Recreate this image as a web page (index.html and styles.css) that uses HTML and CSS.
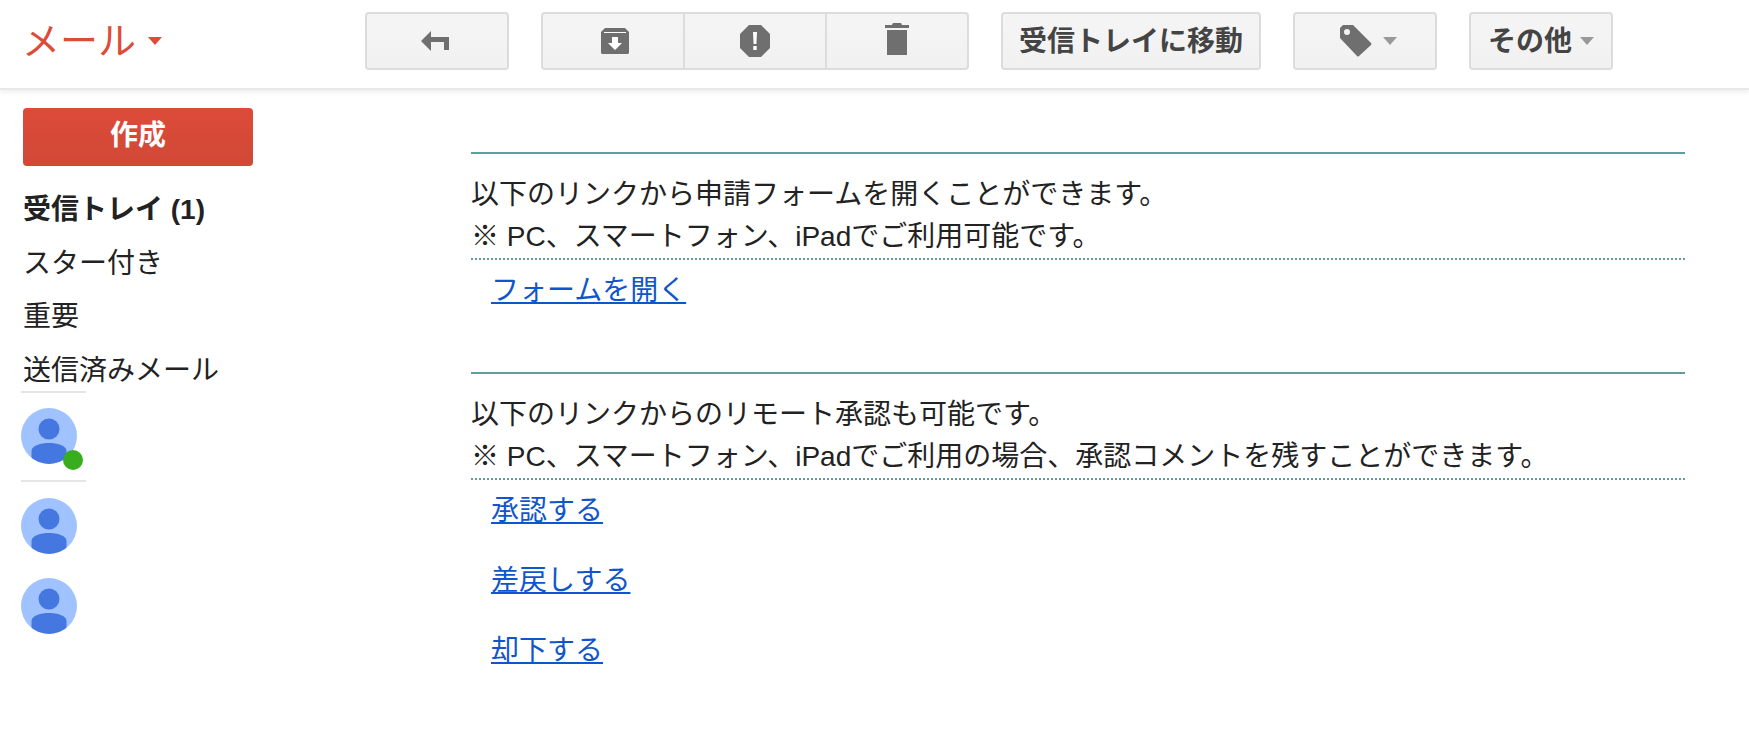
FILE: index.html
```html
<!DOCTYPE html>
<html lang="ja">
<head>
    <meta charset="UTF-8">
    <title>メール</title>
    <link rel="stylesheet" href="styles.css">
</head>
<body>
    <header class="toolbar">
        <div class="logo">メール<span class="logo-caret"></span></div>

        <div class="btn btn-icon">
            <svg class="reply-icon" width="28" height="20" viewBox="0 0 28 20"><path d="M0 10 10 0V6H28V19H23V11H10V20Z" fill="#6f6f6f"/></svg>
        </div>

        <div class="btn-group">
            <div class="btn-cell">
                <svg class="archive-icon" width="28" height="26" viewBox="0 0 28 26"><path d="M4 0H24L28 4V25L27 26H1L0 25V4Z" fill="#6f6f6f"/><path d="M3 4H25V5H3ZM11 9H17V15H21L14 22 7 15H11Z" fill="#fff"/></svg>
            </div>
            <div class="btn-cell">
                <svg width="30" height="32" viewBox="0 0 30 32"><path d="M9 0H21L30 9V23L21 32H9L0 23V9Z" fill="#6f6f6f"/><path d="M13 7H17L16.400 19H13.600ZM13.300 21H16.700V25H13.300Z" fill="#fff"/></svg>
            </div>
            <div class="btn-cell">
                <svg class="trash-icon" width="24" height="32" viewBox="0 0 24 32"><path d="M8 0H16L17 2H24V5H0V2H7ZM2 7H22V32H2Z" fill="#6f6f6f"/></svg>
            </div>
        </div>

        <div class="btn btn-text btn-move">受信トレイに移動</div>

        <div class="btn btn-tag">
            <svg width="32" height="32" viewBox="0 0 32 32"><path fill-rule="evenodd" d="M3 0H13L31 18Q32 19 31 20L19 31Q18 32 17 31L0 13V3ZM7 4A3 3 0 1 0 7 10 3 3 0 1 0 7 4Z" fill="#6f6f6f"/></svg>
            <span class="caret"></span>
        </div>

        <div class="btn btn-text btn-more">その他<span class="caret"></span></div>
    </header>

    <div class="page">
        <aside class="sidebar">
            <div class="compose">作成</div>

            <nav class="nav">
                <div class="nav-item nav-active">受信トレイ (1)</div>
                <div class="nav-item">スター付き</div>
                <div class="nav-item">重要</div>
                <div class="nav-item">送信済みメール</div>
            </nav>

            <div class="chat-me">
                <div class="avatar">
                    <svg width="56" height="56" viewBox="0 0 56 56"><use href="#person"/></svg>
                    <span class="online"></span>
                </div>
            </div>

            <div class="chat-list">
                <div class="avatar">
                    <svg width="56" height="56" viewBox="0 0 56 56"><use href="#person"/></svg>
                </div>
                <div class="avatar">
                    <svg width="56" height="56" viewBox="0 0 56 56"><use href="#person"/></svg>
                </div>
            </div>
        </aside>

        <main class="mail">
            <section class="block">
                <div class="block-text">
                    <p>以下のリンクから申請フォームを開くことができます。</p>
                    <p>※ PC、スマートフォン、iPadでご利用可能です。</p>
                </div>
                <div class="block-links">
                    <a href="#">フォームを開く</a>
                </div>
            </section>

            <section class="block">
                <div class="block-text">
                    <p>以下のリンクからのリモート承認も可能です。</p>
                    <p>※ PC、スマートフォン、iPadでご利用の場合、承認コメントを残すことができます。</p>
                </div>
                <div class="block-links">
                    <a href="#">承認する</a>
                    <a href="#">差戻しする</a>
                    <a href="#">却下する</a>
                </div>
            </section>
        </main>
    </div>

    <svg width="0" height="0" class="defs">
        <defs>
            <clipPath id="avatar-clip"><circle cx="28" cy="28" r="28"/></clipPath>
            <g id="person">
                <circle cx="28" cy="28" r="28" fill="#a0c3ff"/>
                <circle cx="28" cy="21" r="10.500" fill="#4577e0"/>
                <path d="M10.500 43C10.500 37.500 20 35 28 35S45.500 37.500 45.500 43V56H10.500Z" fill="#4577e0" clip-path="url(#avatar-clip)"/>
            </g>
        </defs>
    </svg>
</body>
</html>
```

FILE: styles.css
```css
body {
    font-family: "Liberation Sans", "Noto Sans CJK JP", sans-serif;
    font-size: 28px;
    color: #222;
    background-color: #fff;
    margin: 0;
    padding: 0;
    height: 744px;
    overflow: hidden;
}
.defs {
    display: block;
    height: 0;
}

/* Toolbar */
.toolbar {
    display: flex;
    align-items: flex-start;
    gap: 32px;
    box-sizing: border-box;
    height: 90px;
    padding: 12px 0 0 22px;
    border-bottom: 2px solid #e8e8e8;
    box-shadow: 0 2px 5px rgba(0, 0, 0, 0.08);
}
.logo {
    display: flex;
    align-items: center;
    width: 311px;
    height: 50px;
    font-size: 38px;
    color: #dd4b39;
}
.logo-caret {
    margin: 8px 0 0 12px;
    border-top: 8px solid #dd4b39;
    border-left: 7px solid transparent;
    border-right: 7px solid transparent;
}
.btn,
.btn-group {
    box-sizing: border-box;
    display: flex;
    align-items: center;
    justify-content: center;
    height: 58px;
    border: 2px solid #dcdcdc;
    border-radius: 4px;
    background: linear-gradient(#f5f5f5, #f1f1f1);
}
.btn {
    width: 144px;
    font-weight: bold;
    color: #444;
}
.btn-group {
    width: 428px;
}
.btn-cell {
    flex: 1;
    height: 100%;
    display: flex;
    align-items: center;
    justify-content: center;
    border-right: 2px solid #dcdcdc;
}
.btn-cell:last-child {
    border-right: none;
}
.btn-text {
    padding-bottom: 4px;
}
.btn-move {
    width: 260px;
}
.btn-tag {
    padding-left: 7px;
}
.reply-icon {
    margin-left: -4px;
}
.archive-icon {
    margin-left: 4px;
}
.trash-icon {
    margin-bottom: 4px;
}
.caret {
    margin: 0 0 0 11px;
    border-top: 8px solid #999;
    border-left: 7px solid transparent;
    border-right: 7px solid transparent;
}
.btn-more .caret {
    margin: 4px 0 0 8px;
}

/* Page */
.page {
    display: flex;
}
.sidebar {
    box-sizing: border-box;
    width: 471px;
    padding: 18px 0 0 21px;
}
.compose {
    box-sizing: border-box;
    width: 230px;
    height: 58px;
    margin-left: 2px;
    line-height: 56px;
    text-align: center;
    font-weight: bold;
    color: #fff;
    background: linear-gradient(#dd4b39, #d14836);
    border-radius: 4px;
}
.nav {
    margin: 17px 0 0 2px;
}
.nav-item {
    height: 53.500px;
    line-height: 53.500px;
    white-space: nowrap;
}
.nav-active {
    font-weight: bold;
}
.chat-me {
    position: relative;
    width: 65px;
    height: 91px;
    margin-top: -6px;
    padding-top: 15px;
    box-sizing: border-box;
    border-top: 2px solid #e5e5e5;
    border-bottom: 2px solid #e5e5e5;
}
/* fade over the last nav row */
.chat-me::before {
    content: "";
    position: absolute;
    left: 0;
    right: 0;
    top: -10px;
    height: 8px;
    background: linear-gradient(rgba(255, 255, 255, 0), #fff);
}
.chat-list {
    padding-top: 16px;
}
.avatar {
    position: relative;
    width: 56px;
    height: 56px;
    margin-bottom: 24px;
}
.avatar svg {
    display: block;
}
.online {
    position: absolute;
    left: 42px;
    top: 42px;
    width: 20px;
    height: 20px;
    border-radius: 50%;
    background-color: #38ae1e;
}

/* Mail body */
.mail {
    width: 1214px;
    padding-top: 62px;
}
.block {
    border-top: 2px solid #5f9ea0;
    padding-top: 20px;
    margin-bottom: 60px;
}
.block-text {
    border-bottom: 2px dotted #5f9ea0;
}
.block-text p {
    margin: 0;
    line-height: 42px;
    white-space: nowrap;
}
.block-links {
    padding: 10px 0 0 20px;
}
.block-links a {
    display: block;
    width: fit-content;
    line-height: 42px;
    margin-bottom: 28px;
    color: #1155cc;
}
.block-links a:last-child {
    margin-bottom: 0;
}
```
